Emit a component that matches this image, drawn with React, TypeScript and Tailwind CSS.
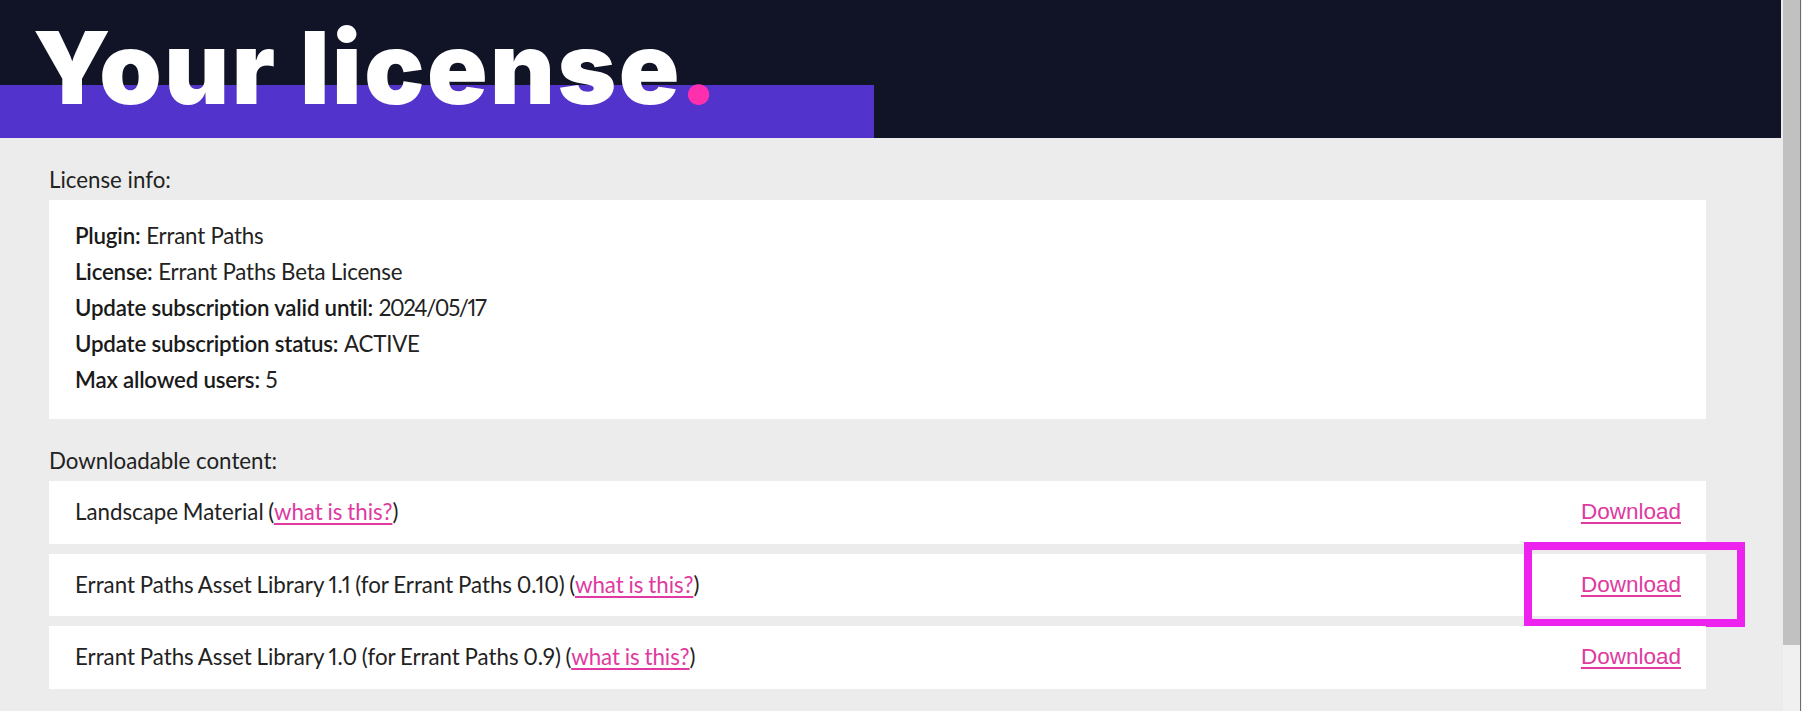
import React from 'react';

const body = { fontFamily: 'Lato, "Noto Sans", sans-serif' };

const info = [
  { label: 'Plugin:', value: 'Errant Paths', numeric: false },
  { label: 'License:', value: 'Errant Paths Beta License', numeric: false },
  { label: 'Update subscription valid until:', value: '2024/05/17', numeric: true },
  { label: 'Update subscription status:', value: 'ACTIVE', numeric: false },
  { label: 'Max allowed users:', value: '5', numeric: false },
];

const downloads = [
  { name: 'Landscape Material', marked: false },
  { name: 'Errant Paths Asset Library 1.1 (for Errant Paths 0.10)', marked: true },
  { name: 'Errant Paths Asset Library 1.0 (for Errant Paths 0.9)', marked: false },
];

function Scrollbar() {
  return (
    <div className="flex h-full w-[21px] shrink-0 bg-[#f0f0f0]">
      <div className="w-[2px] bg-[#ebebeb]" />
      <div className="h-[645px] w-[17px] bg-[#c1c1c1]" />
      <div className="w-[1px] bg-[#6e6e6e]" />
      <div className="w-[1px]" />
    </div>
  );
}

export default function App() {
  return (
    <div className="flex h-[711px] w-full overflow-hidden bg-[#ececec]">
      <div className="flex min-w-0 flex-1 flex-col">
        <header className="relative h-[138px] bg-[#101426]">
          <div className="absolute bottom-0 left-0 h-[53px] w-[874px] bg-[#5233cc]" />
          <h1
            className="relative whitespace-nowrap pl-[33px] pt-[16px] text-[100px] leading-[100px] font-black tracking-[2.5px] text-white"
            style={{ fontFamily: 'Inter, sans-serif' }}
          >
            Your license
            <span className="ml-[-3px] text-[105px] leading-[100px] tracking-normal text-[#ff2fad]">.</span>
          </h1>
        </header>

        <main
          className="pl-[49px] pr-[75px] pt-[24px] text-[22.3px] text-[#222222] proportional-nums"
          style={body}
        >
          <p className="leading-[36px]">License info:</p>
          <div className="mt-[2px] bg-white pl-[26px] pt-[18px] pb-[21px]">
            {info.map((row) => (
              <p key={row.label} className="leading-[36px]">
                <span className="font-semibold tracking-[-0.2px] text-[#1a1a1a]">{row.label}</span>{' '}
                <span className={row.numeric ? 'tracking-[-1.4px]' : 'tracking-[-0.2px]'}>{row.value}</span>
              </p>
            ))}
          </div>

          <p className="mt-[24px] leading-[36px]">Downloadable content:</p>
          <div className="mt-[2px] flex flex-col gap-[10px]">
            {downloads.map((d) => (
              <div
                key={d.name}
                className="relative flex h-[62.5px] items-center justify-between bg-white pl-[26px] pr-[25px]"
              >
                <span className="leading-[36px] [word-spacing:-1px]">
                  {d.name} (
                  <a href="#" className="text-[#e0399f] underline underline-offset-[3px]">
                    what is this?
                  </a>
                  )
                </span>
                <a
                  href="#"
                  className="text-[22.5px] text-[#e0399f] underline underline-offset-[3px]"
                  style={{ fontFamily: '"Liberation Sans", Arial, sans-serif' }}
                >
                  Download
                </a>
                {d.marked && (
                  <div className="absolute right-[-39px] top-[-12px] h-[85px] w-[221px] border-[8px] border-[#ee22ee]" />
                )}
              </div>
            ))}
          </div>
        </main>
      </div>
      <Scrollbar />
    </div>
  );
}
